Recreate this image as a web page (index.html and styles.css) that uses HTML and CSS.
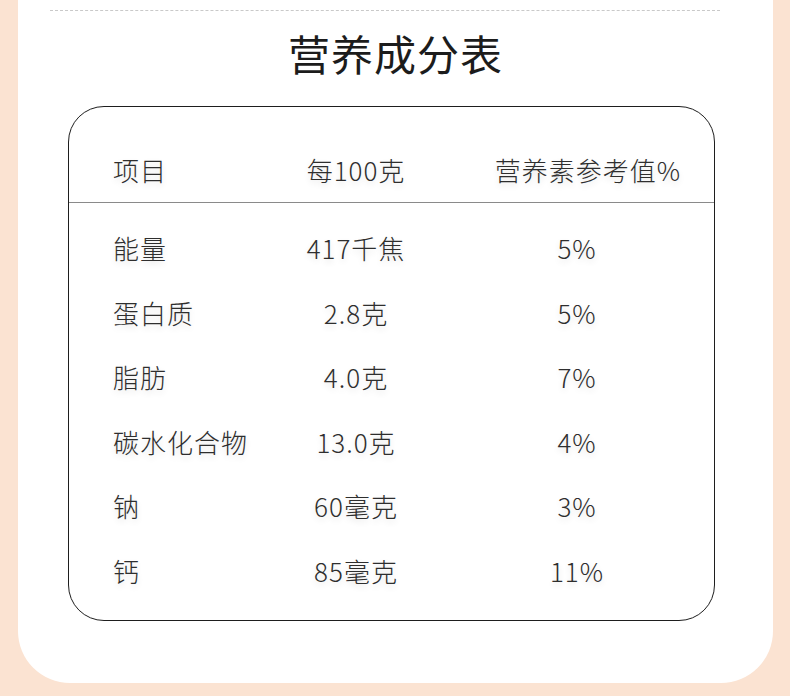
FILE: index.html
```html
<!DOCTYPE html>
<html lang="zh-CN">
<head>
<meta charset="utf-8">
<title>营养成分表</title>
<link rel="stylesheet" href="styles.css">
</head>
<body>
<div class="card">
  <div class="dots"></div>
  <h1 class="title">营养成分表</h1>
  <div class="table">
    <div class="row head">
      <div class="c1">项目</div>
      <div class="c2">每100克</div>
      <div class="c3 h3">营养素参考值%</div>
    </div>
    <div class="body">
      <div class="row"><div class="c1">能量</div><div class="c2">417千焦</div><div class="c3">5%</div></div>
      <div class="row"><div class="c1">蛋白质</div><div class="c2">2.8克</div><div class="c3">5%</div></div>
      <div class="row"><div class="c1">脂肪</div><div class="c2">4.0克</div><div class="c3">7%</div></div>
      <div class="row"><div class="c1">碳水化合物</div><div class="c2">13.0克</div><div class="c3">4%</div></div>
      <div class="row"><div class="c1">钠</div><div class="c2">60毫克</div><div class="c3">3%</div></div>
      <div class="row"><div class="c1">钙</div><div class="c2">85毫克</div><div class="c3">11%</div></div>
    </div>
  </div>
</div>
</body>
</html>
```
FILE: styles.css
```css
html, body {
  margin: 0;
  padding: 0;
}
body {
  background: #fbe3d2;
  width: 790px;
  height: 696px;
  overflow: hidden;
  font-family: "Noto Sans CJK SC", "Noto Sans", sans-serif;
}
.card {
  margin: 0 17px 0 18px;
  height: 683px;
  background: #ffffff;
  border-radius: 0 0 52px 52px;
  box-sizing: border-box;
  padding-top: 10px;
}
.dots {
  margin-left: 32px;
  width: 670px;
  border-top: 1px dashed #c9c9c9;
}
.title {
  margin: 18px 0 0 0;
  text-align: center;
  font-size: 42px;
  line-height: 48px;
  font-weight: 400;
  color: #1c1c1c;
  letter-spacing: 1px;
}
.table {
  margin: 29px 0 0 50px;
  width: 647px;
  height: 515px;
  box-sizing: border-box;
  border: 1.5px solid #1e1e1e;
  border-radius: 36px;
}
.row {
  display: grid;
  grid-template-columns: 187px 200px 242px;
  align-items: center;
  height: 64.5px;
  font-size: 26px;
  line-height: 32px;
  letter-spacing: 1px;
  font-weight: 300;
  color: #2e2e2e;
  text-shadow: 0 3px 6px rgba(0, 0, 0, 0.12);
}
.row.head {
  height: auto;
  padding: 47px 0 16px 0;
  border-bottom: 1px solid #8a8a8a;
}
.body {
  padding-top: 13px;
}
.c1 {
  padding-left: 44px;
}
.c2 {
  text-align: center;
}
.c3 {
  text-align: center;
}
.c3.h3 {
  padding-left: 22px;
}
```
